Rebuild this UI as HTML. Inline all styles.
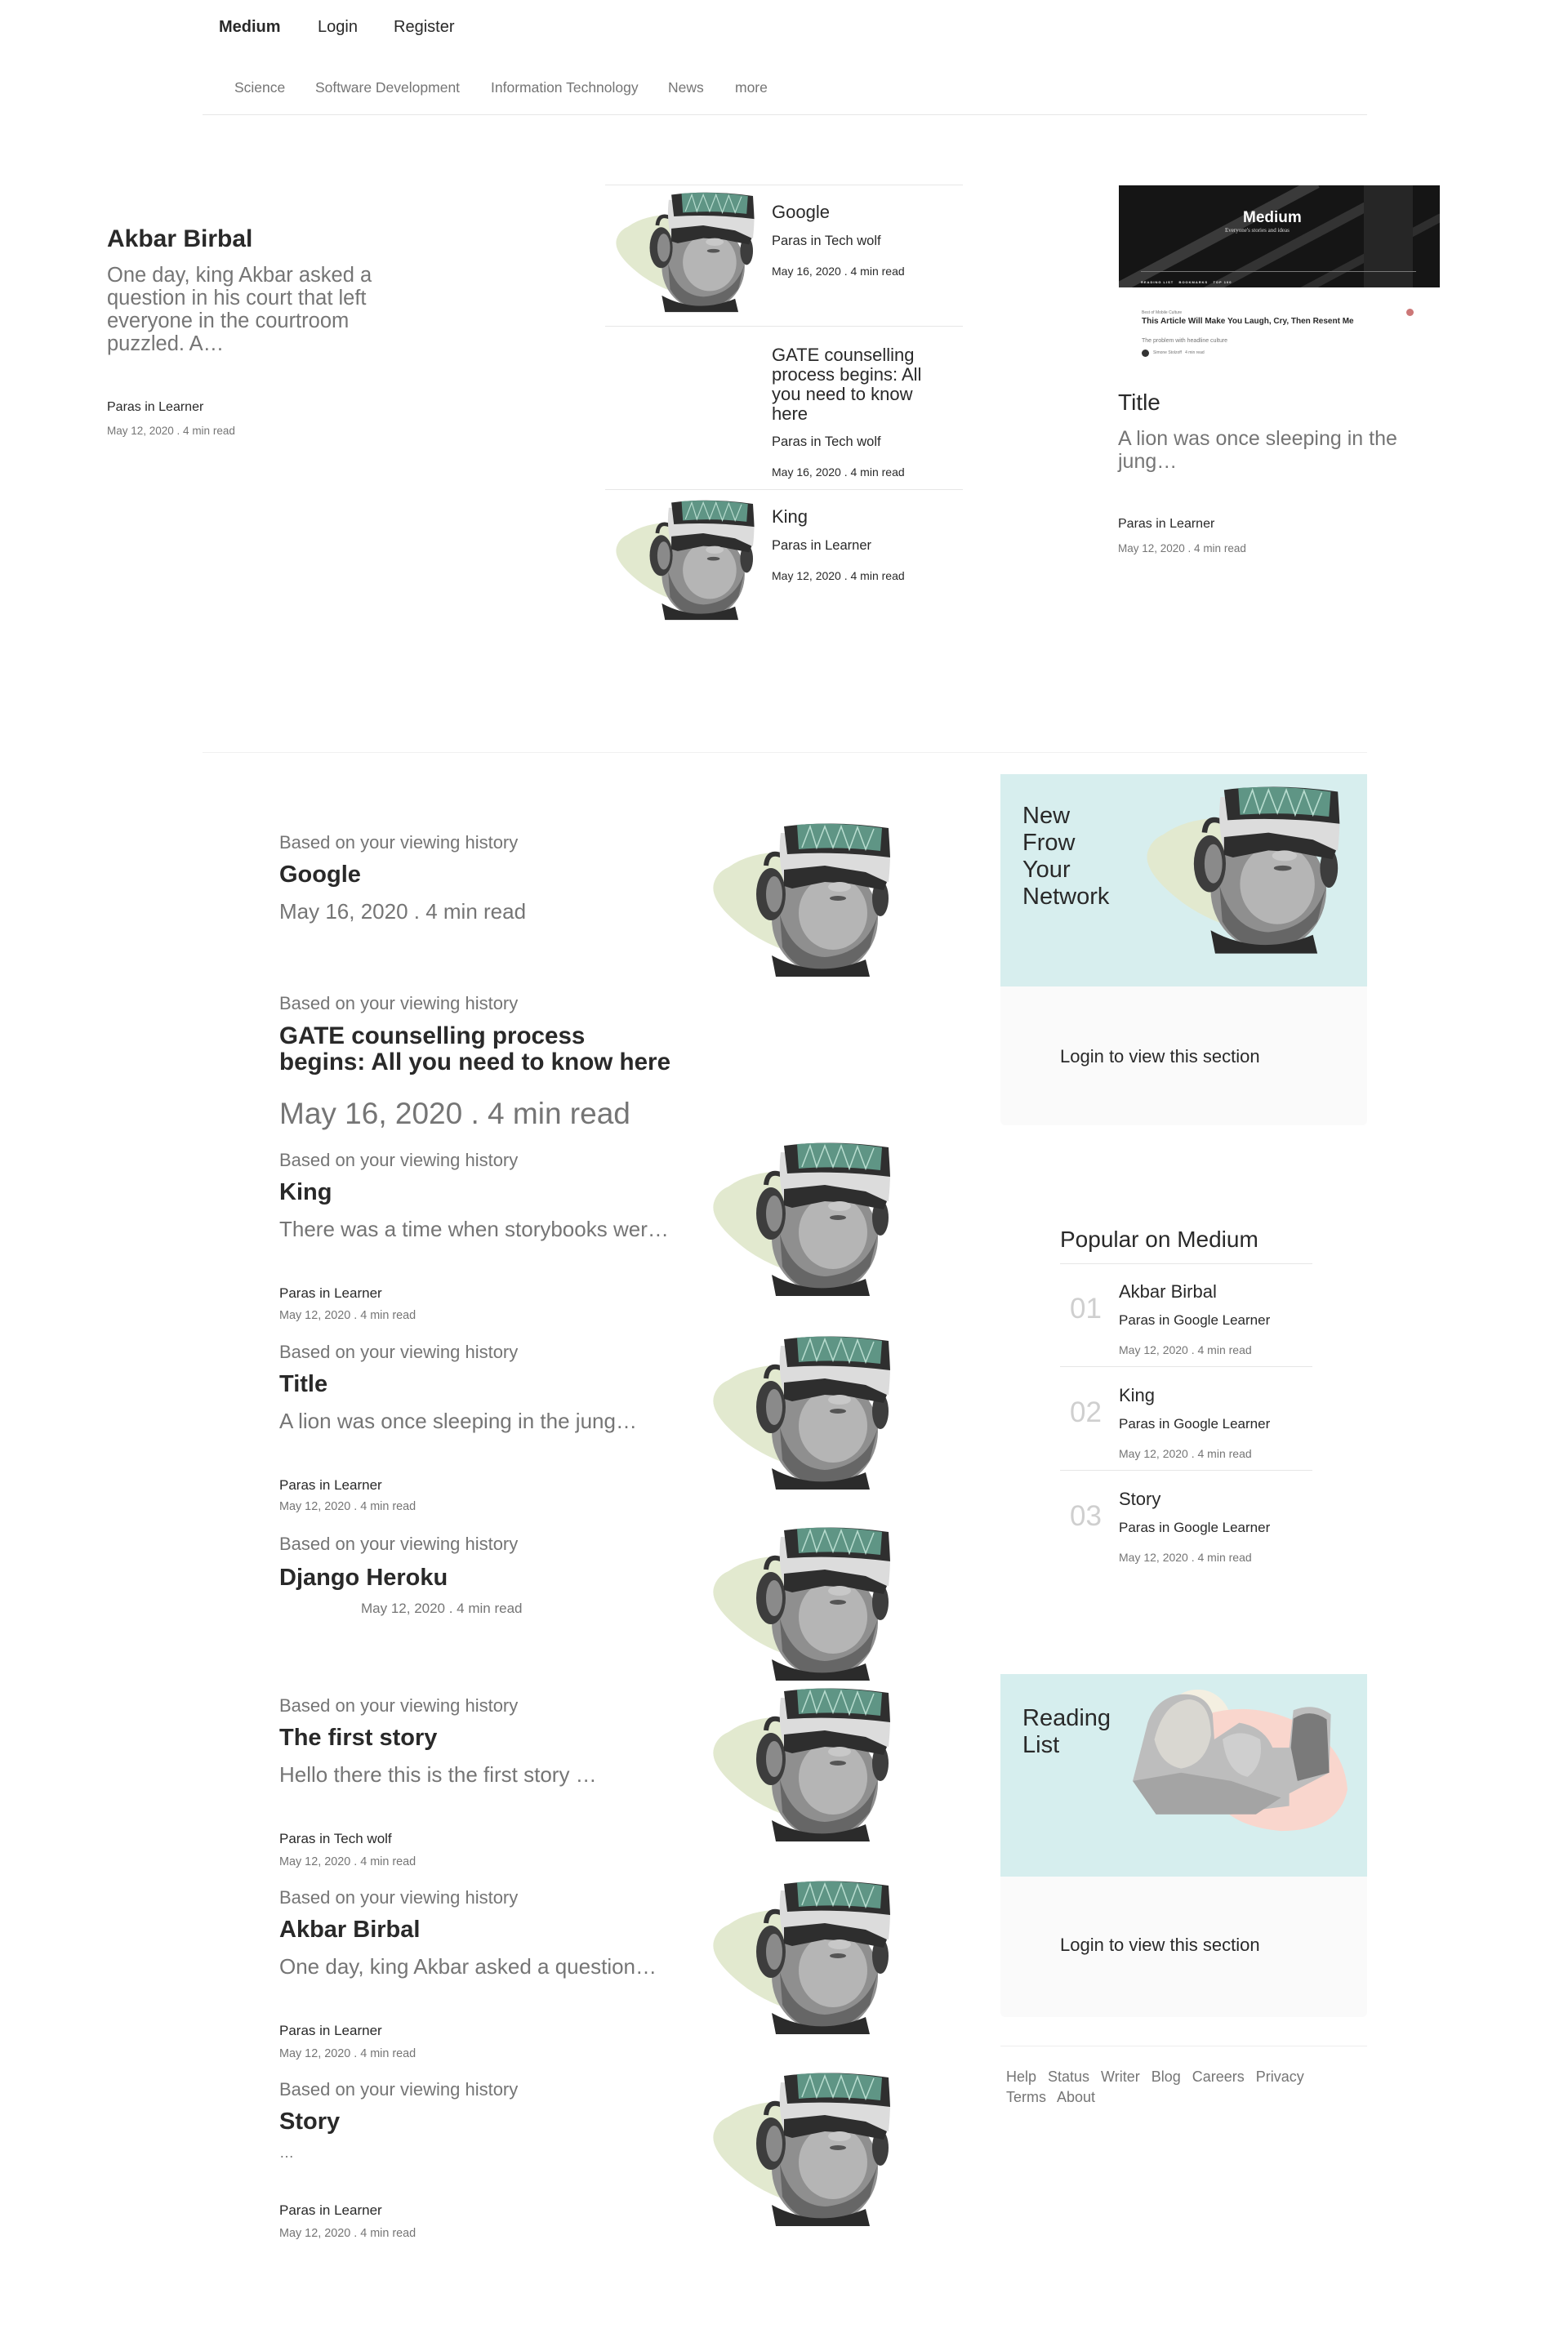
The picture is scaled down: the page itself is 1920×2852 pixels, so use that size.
<!DOCTYPE html>
<html><head><meta charset="utf-8">
<style>
*{margin:0;padding:0;box-sizing:border-box}
body{width:1920px;height:2852px;position:relative;background:#fff;font-family:"Liberation Sans",Arial,sans-serif;color:#292929;overflow:hidden}
.t{position:absolute;white-space:nowrap;line-height:1}
.g{color:#757575}
.b{font-weight:bold}
.hr{position:absolute;height:1px;background:#e6e6e6}
svg.im{position:absolute}
</style></head><body>
<svg width="0" height="0" style="position:absolute">
<defs>
<symbol id="vr" viewBox="0 0 260 220">
<path d="M32 62 Q62 40 118 44 L150 60 L150 175 Q95 168 55 140 Q8 105 14 82 Q18 68 32 62Z" fill="#e2e9cf"/>
<ellipse cx="150" cy="125" rx="65" ry="68" fill="#8f8f8f"/>
<ellipse cx="160" cy="118" rx="42" ry="45" fill="#b5b5b5"/>
<path d="M95 120 Q110 170 150 172 Q200 168 215 120 L205 160 Q180 190 150 192 Q115 190 98 160Z" fill="#666"/>
<path d="M85 170 Q140 200 200 175 L205 196 L90 196Z" fill="#2b2b2b"/>
<ellipse cx="84" cy="95" rx="18" ry="32" fill="#3d3d3d"/>
<ellipse cx="88" cy="95" rx="10" ry="22" fill="#8a8a8a"/>
<path d="M78 60 Q80 40 98 48" stroke="#333" stroke-width="6" fill="none"/>
<ellipse cx="218" cy="100" rx="10" ry="22" fill="#3d3d3d"/>
<path d="M96 20 L228 22 Q232 40 228 80 L175 70 L150 65 L120 75 L100 80 Q92 50 96 20Z" fill="#dcdcdc"/>
<path d="M100 65 L150 60 L200 68 L226 80 L222 90 L180 82 L150 80 L110 88 L100 85Z" fill="#2e2e2e"/>
<path d="M100 12 Q160 4 228 14 L230 50 Q165 42 104 46Z" fill="#2f2f2f"/>
<path d="M116 10 Q165 6 220 14 L218 42 Q165 36 118 40Z" fill="#5f9585"/>
<path d="M122 38 L132 12 L140 38 L150 12 L160 38 L170 12 L180 40 L190 13 L200 40 L210 15" stroke="#b8dccf" stroke-width="1.5" fill="none"/>
<ellipse cx="168" cy="86" rx="14" ry="6" fill="#c8c8c8"/>
<ellipse cx="166" cy="100" rx="10" ry="3" fill="#555"/>
</symbol>
<symbol id="rush" viewBox="0 0 260 175">
<circle cx="80" cy="40" r="40" fill="#f4efe1"/>
<path d="M90 30 Q140 15 190 35 Q255 60 260 120 Q250 170 180 170 Q120 165 100 130 Z" fill="#f9d6cd"/>
<path d="M2 110 L20 40 Q30 10 60 6 Q90 4 98 30 L100 60 L130 40 Q160 45 170 70 L190 70 L195 25 Q220 15 240 30 L238 100 L190 125 L190 140 L150 145 L120 150 L30 150 Z" fill="#bdbdbd"/>
<path d="M28 60 Q40 14 70 12 Q95 14 96 55 Q90 90 60 95 Q35 90 28 60Z" fill="#d9d7d1"/>
<path d="M110 60 Q130 45 155 60 Q160 90 140 105 Q115 100 110 60Z" fill="#cfcfcf"/>
<path d="M195 35 Q215 22 235 36 L238 100 L200 110 L192 70Z" fill="#7a7a7a"/>
<path d="M2 110 L60 100 L120 110 L180 130 L150 150 L30 150Z" fill="#a4a4a4"/>
</symbol>
</defs>
</svg>

<!-- nav -->
<div class="t b" style="left:268px;top:23px;font-size:20px">Medium</div>
<div class="t" style="left:389px;top:23px;font-size:20px">Login</div>
<div class="t" style="left:482px;top:23px;font-size:20px">Register</div>
<div class="t g" style="left:287px;top:99px;font-size:17.5px">Science</div>
<div class="t g" style="left:386px;top:99px;font-size:17.5px">Software Development</div>
<div class="t g" style="left:601px;top:99px;font-size:17.5px">Information Technology</div>
<div class="t g" style="left:818px;top:99px;font-size:17.5px">News</div>
<div class="t g" style="left:900px;top:99px;font-size:17.5px">more</div>
<div class="hr" style="left:248px;top:140px;width:1426px"></div>

<!-- hero left -->
<div class="t b" style="left:131px;top:278px;font-size:30px">Akbar Birbal</div>
<div class="g" style="position:absolute;left:131px;top:323px;width:380px;font-size:25.5px;line-height:28px">One day, king Akbar asked a question in his court that left everyone in the courtroom puzzled. A…</div>
<div class="t" style="left:131px;top:491px;font-size:16px">Paras in Learner</div>
<div class="t g" style="left:131px;top:521px;font-size:13.5px">May 12, 2020 . 4 min read</div>

<!-- hero middle -->
<div class="hr" style="left:741px;top:226px;width:438px"></div>
<svg class="im" style="left:744px;top:229px" width="203" height="172" viewBox="0 0 260 220"><use href="#vr"/></svg>
<div class="t" style="left:945px;top:249px;font-size:22px">Google</div>
<div class="t" style="left:945px;top:287px;font-size:16.5px">Paras in Tech wolf</div>
<div class="t" style="left:945px;top:325px;font-size:14px">May 16, 2020 . 4 min read</div>
<div class="hr" style="left:741px;top:399px;width:438px"></div>
<div style="position:absolute;left:945px;top:423px;width:200px;font-size:22px;line-height:24px">GATE counselling process begins: All you need to know here</div>
<div class="t" style="left:945px;top:533px;font-size:16.5px">Paras in Tech wolf</div>
<div class="t" style="left:945px;top:571px;font-size:14px">May 16, 2020 . 4 min read</div>
<div class="hr" style="left:741px;top:599px;width:438px"></div>
<svg class="im" style="left:744px;top:606px" width="203" height="172" viewBox="0 0 260 220"><use href="#vr"/></svg>
<div class="t" style="left:945px;top:622px;font-size:22px">King</div>
<div class="t" style="left:945px;top:660px;font-size:16.5px">Paras in Learner</div>
<div class="t" style="left:945px;top:698px;font-size:14px">May 12, 2020 . 4 min read</div>

<!-- hero right -->
<div style="position:absolute;left:1370px;top:227px;width:393px;height:125px;background:#151515;overflow:hidden">
  <div style="position:absolute;left:-40px;top:60px;width:300px;height:14px;background:#3a3a3a;transform:rotate(-28deg)"></div>
  <div style="position:absolute;left:40px;top:80px;width:300px;height:12px;background:#333;transform:rotate(-28deg)"></div>
  <div style="position:absolute;left:150px;top:95px;width:260px;height:10px;background:#2e2e2e;transform:rotate(-28deg)"></div>
  <div style="position:absolute;left:300px;top:0;width:60px;height:125px;background:#262626"></div>
  <div class="t b" style="left:152px;top:30px;font-size:19px;color:#fff">Medium</div>
  <div class="t" style="left:130px;top:52px;font-size:7px;color:#ddd;font-family:'Liberation Serif',serif">Everyone's stories and ideas</div>
  <div style="position:absolute;left:27px;top:105px;width:337px;height:1px;background:#777"></div>
  <div class="t b" style="left:27px;top:117px;font-size:4px;color:#eee;letter-spacing:1px">READING LIST &nbsp; BOOKMARKS &nbsp; TOP 100</div>
</div>
<div class="t g" style="left:1398px;top:381px;font-size:5px">Best of Mobile Culture</div>
<div class="b" style="position:absolute;left:1398px;top:388px;width:300px;font-size:10px;line-height:11px">This Article Will Make You Laugh, Cry, Then Resent Me</div>
<div class="t g" style="left:1398px;top:414px;font-size:7px">The problem with headline culture</div>
<div style="position:absolute;left:1398px;top:428px;width:9px;height:9px;border-radius:50%;background:#333"></div>
<div class="t g" style="left:1412px;top:430px;font-size:5px">Simone Stolzoff &nbsp; 4 min read</div>
<div style="position:absolute;left:1722px;top:378px;width:9px;height:9px;border-radius:50%;background:#c77"></div>
<div class="t" style="left:1369px;top:479px;font-size:28px">Title</div>
<div class="g" style="position:absolute;left:1369px;top:523px;width:390px;font-size:25px;line-height:28px">A lion was once sleeping in the jung…</div>
<div class="t" style="left:1369px;top:634px;font-size:16px">Paras in Learner</div>
<div class="t g" style="left:1369px;top:665px;font-size:13.5px">May 12, 2020 . 4 min read</div>

<div class="hr" style="left:248px;top:921px;width:1426px;background:#f0f0f0"></div>

<!-- feed -->
<div class="t g" style="left:342px;top:1021px;font-size:22px">Based on your viewing history</div>
<div class="t b" style="left:342px;top:1057px;font-size:29px">Google</div>
<div class="t g" style="left:342px;top:1103px;font-size:26px">May 16, 2020 . 4 min read</div>
<svg class="im" style="left:860px;top:1000px" width="260" height="220" viewBox="0 0 260 220"><use href="#vr"/></svg>

<div class="t g" style="left:342px;top:1218px;font-size:22px">Based on your viewing history</div>
<div class="b" style="position:absolute;left:342px;top:1253px;width:540px;font-size:29.6px;line-height:32px">GATE counselling process<br>begins: All you need to know here</div>
<div class="t g" style="left:342px;top:1345px;font-size:37px">May 16, 2020 . 4 min read</div>

<div class="t g" style="left:342px;top:1410px;font-size:22px">Based on your viewing history</div>
<div class="t b" style="left:342px;top:1446px;font-size:29px">King</div>
<div class="t g" style="left:342px;top:1492px;font-size:26px">There was a time when storybooks wer…</div>
<div class="t" style="left:342px;top:1575px;font-size:17px">Paras in Learner</div>
<div class="t g" style="left:342px;top:1604px;font-size:14.4px">May 12, 2020 . 4 min read</div>
<svg class="im" style="left:860px;top:1391px" width="260" height="220" viewBox="0 0 260 220"><use href="#vr"/></svg>

<div class="t g" style="left:342px;top:1645px;font-size:22px">Based on your viewing history</div>
<div class="t b" style="left:342px;top:1681px;font-size:29px">Title</div>
<div class="t g" style="left:342px;top:1727px;font-size:26px">A lion was once sleeping in the jung…</div>
<div class="t" style="left:342px;top:1810px;font-size:17px">Paras in Learner</div>
<div class="t g" style="left:342px;top:1838px;font-size:14.4px">May 12, 2020 . 4 min read</div>
<svg class="im" style="left:860px;top:1628px" width="260" height="220" viewBox="0 0 260 220"><use href="#vr"/></svg>

<div class="t g" style="left:342px;top:1880px;font-size:22px">Based on your viewing history</div>
<div class="t b" style="left:342px;top:1918px;font-size:29px">Django Heroku</div>
<div class="t g" style="left:442px;top:1961px;font-size:17px">May 12, 2020 . 4 min read</div>
<svg class="im" style="left:860px;top:1862px" width="260" height="220" viewBox="0 0 260 220"><use href="#vr"/></svg>

<div class="t g" style="left:342px;top:2078px;font-size:22px">Based on your viewing history</div>
<div class="t b" style="left:342px;top:2114px;font-size:29px">The first story</div>
<div class="t g" style="left:342px;top:2160px;font-size:26px">Hello there this is the first story …</div>
<div class="t" style="left:342px;top:2243px;font-size:17px">Paras in Tech wolf</div>
<div class="t g" style="left:342px;top:2273px;font-size:14.4px">May 12, 2020 . 4 min read</div>
<svg class="im" style="left:860px;top:2059px" width="260" height="220" viewBox="0 0 260 220"><use href="#vr"/></svg>

<div class="t g" style="left:342px;top:2313px;font-size:22px">Based on your viewing history</div>
<div class="t b" style="left:342px;top:2349px;font-size:29px">Akbar Birbal</div>
<div class="t g" style="left:342px;top:2395px;font-size:26px">One day, king Akbar asked a question…</div>
<div class="t" style="left:342px;top:2478px;font-size:17px">Paras in Learner</div>
<div class="t g" style="left:342px;top:2508px;font-size:14.4px">May 12, 2020 . 4 min read</div>
<svg class="im" style="left:860px;top:2295px" width="260" height="220" viewBox="0 0 260 220"><use href="#vr"/></svg>

<div class="t g" style="left:342px;top:2548px;font-size:22px">Based on your viewing history</div>
<div class="t b" style="left:342px;top:2584px;font-size:29px">Story</div>
<div class="t g" style="left:342px;top:2627px;font-size:18px">…</div>
<div class="t" style="left:342px;top:2698px;font-size:17px">Paras in Learner</div>
<div class="t g" style="left:342px;top:2728px;font-size:14.4px">May 12, 2020 . 4 min read</div>
<svg class="im" style="left:860px;top:2530px" width="260" height="220" viewBox="0 0 260 220"><use href="#vr"/></svg>

<!-- sidebar -->
<div style="position:absolute;left:1225px;top:948px;width:449px;height:260px;background:#d7eeee;overflow:hidden">
  <svg style="position:absolute;left:165px;top:6px" width="283" height="240" viewBox="0 0 260 220"><use href="#vr"/></svg>
</div>
<div style="position:absolute;left:1252px;top:983px;font-size:29px;line-height:33px">New<br>Frow<br>Your<br>Network</div>
<div style="position:absolute;left:1225px;top:1208px;width:449px;height:170px;background:#fafafa;border-radius:0 0 6px 6px"></div>
<div class="t" style="left:1298px;top:1283px;font-size:22px">Login to view this section</div>

<div class="t" style="left:1298px;top:1504px;font-size:28px">Popular on Medium</div>
<div class="hr" style="left:1298px;top:1547px;width:309px"></div>
<div class="t" style="left:1310px;top:1585px;font-size:35px;color:#cfcfcf">01</div>
<div class="t" style="left:1370px;top:1571px;font-size:22px">Akbar Birbal</div>
<div class="t" style="left:1370px;top:1608px;font-size:17px">Paras in Google Learner</div>
<div class="t g" style="left:1370px;top:1646px;font-size:14px">May 12, 2020 . 4 min read</div>
<div class="hr" style="left:1298px;top:1673px;width:309px"></div>
<div class="t" style="left:1310px;top:1712px;font-size:35px;color:#cfcfcf">02</div>
<div class="t" style="left:1370px;top:1698px;font-size:22px">King</div>
<div class="t" style="left:1370px;top:1735px;font-size:17px">Paras in Google Learner</div>
<div class="t g" style="left:1370px;top:1773px;font-size:14px">May 12, 2020 . 4 min read</div>
<div class="hr" style="left:1298px;top:1800px;width:309px"></div>
<div class="t" style="left:1310px;top:1839px;font-size:35px;color:#cfcfcf">03</div>
<div class="t" style="left:1370px;top:1825px;font-size:22px">Story</div>
<div class="t" style="left:1370px;top:1862px;font-size:17px">Paras in Google Learner</div>
<div class="t g" style="left:1370px;top:1900px;font-size:14px">May 12, 2020 . 4 min read</div>

<div style="position:absolute;left:1225px;top:2050px;width:449px;height:248px;background:#d6eeee;overflow:hidden">
  <svg style="position:absolute;left:160px;top:18px" width="265" height="180" viewBox="0 0 260 175"><use href="#rush"/></svg>
</div>
<div style="position:absolute;left:1252px;top:2088px;font-size:29px;line-height:33px">Reading<br>List</div>
<div style="position:absolute;left:1225px;top:2298px;width:449px;height:172px;background:#fafafa;border-radius:0 0 6px 6px"></div>
<div class="t" style="left:1298px;top:2371px;font-size:22px">Login to view this section</div>

<div class="hr" style="left:1225px;top:2505px;width:449px;background:#eee"></div>
<div class="g" style="position:absolute;left:1232px;top:2531px;width:400px;font-size:18px;line-height:25px;word-spacing:9px">Help Status Writer Blog Careers Privacy Terms About</div>
</body></html>
